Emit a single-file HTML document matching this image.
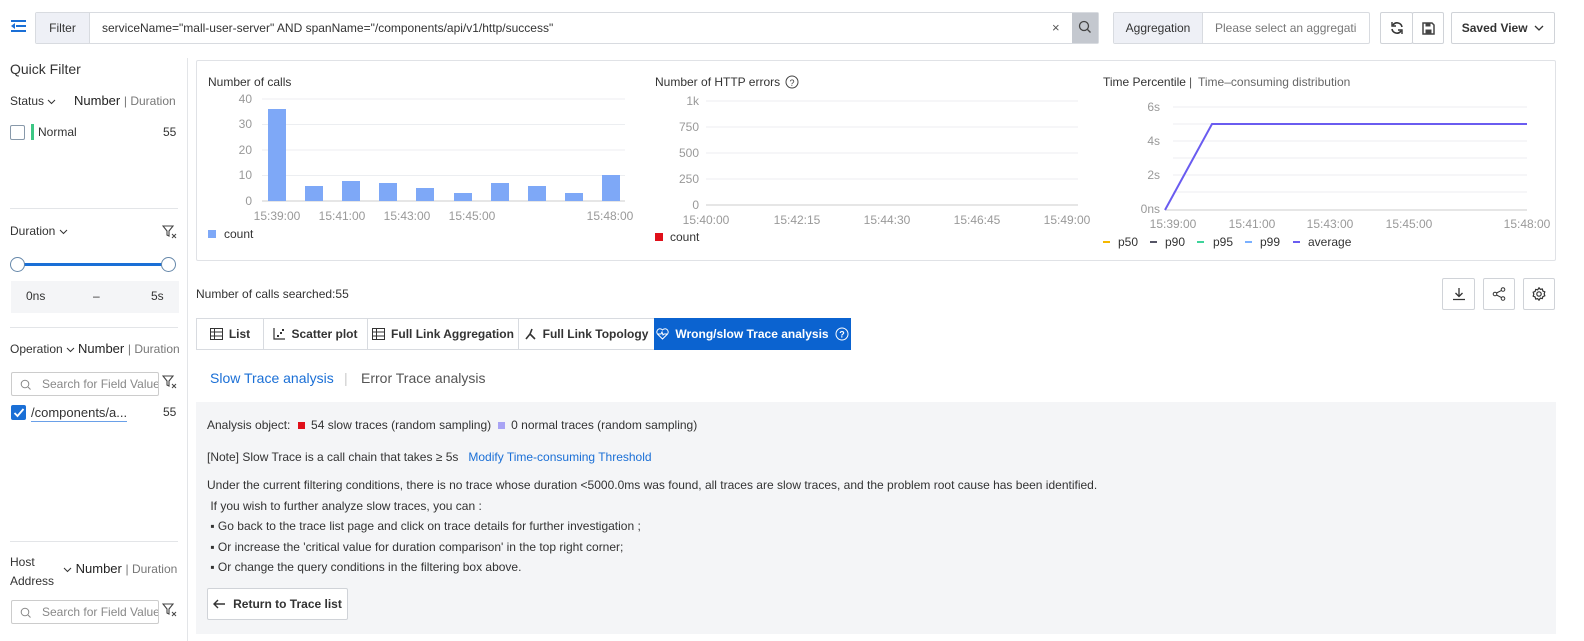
<!DOCTYPE html>
<html><head><meta charset="utf-8"><style>
*{box-sizing:border-box;margin:0;padding:0}
body{width:1584px;height:641px;background:#fff;font-family:"Liberation Sans",sans-serif;color:#333;position:relative;overflow:hidden;font-size:12px}
.a{position:absolute;white-space:nowrap}
.box{position:absolute;border:1px solid #d8dbe0;border-radius:2px;background:#fff}
.btn{position:absolute;border:1px solid #d0d3d8;border-radius:2px;background:#fff;display:flex;align-items:center;justify-content:center}
.g{color:#777}
.sep{position:absolute;height:1px;background:#e3e5e8}
.srch{position:absolute;border:1px solid #ccc;border-radius:2px;height:24px;color:#888;font-size:12px;line-height:22px;padding-left:30px;white-space:nowrap;overflow:hidden}
.tab{position:absolute;top:318px;height:32px;border:1px solid #d8dbe0;display:flex;align-items:center;justify-content:center;font-size:12px;font-weight:bold;color:#333;gap:6px;white-space:nowrap}
</style></head><body>
<svg class="a" style="left:11px;top:19px" width="16" height="14"><g fill="#1a6fd6"><rect x="0" y="1" width="15" height="2"/><rect x="5" y="6" width="10" height="2"/><rect x="0" y="11" width="15" height="2"/><path d="M0 7l4-3v6z"/></g></svg>
<div class="box" style="left:35px;top:12px;width:1064px;height:32px;"></div>
<div class="a" style="left:36px;top:13px;width:54px;height:30px;background:#eef0f6;border-right:1px solid #d8dbe0;line-height:30px;text-align:center;font-size:12px">Filter</div>
<div class="a" style="left:102px;top:13px;line-height:30px;font-size:12px">serviceName="mall-user-server" AND spanName="/components/api/v1/http/success"</div>
<div class="a" style="left:1052px;top:13px;line-height:30px;font-size:13px;color:#555">×</div>
<div class="a" style="left:1072px;top:13px;width:26px;height:30px;background:#c4c8cf"></div>
<svg class="a" style="left:1078px;top:20px" width="14" height="14"><circle cx="6" cy="6" r="4.5" fill="none" stroke="#444" stroke-width="1.3"/><path d="M9.5 9.5l3 3" stroke="#444" stroke-width="1.3"/></svg>
<div class="box" style="left:1113px;top:12px;width:257px;height:32px"></div>
<div class="a" style="left:1114px;top:13px;width:89px;height:30px;background:#eef0f6;border-right:1px solid #d8dbe0;line-height:30px;text-align:center">Aggregation</div>
<div class="a" style="left:1215px;top:13px;line-height:30px;color:#777">Please select an aggregati</div>
<div class="btn" style="left:1380px;top:12px;width:33px;height:32px"><svg width="14" height="14"><path d="M12 6A5 5 0 0 0 3 4M2 8a5 5 0 0 0 9 2" fill="none" stroke="#333" stroke-width="1.6"/><path d="M2 1v4h4M12 13V9H8" fill="none" stroke="#333" stroke-width="1.4"/></svg></div>
<div class="btn" style="left:1412px;top:12px;width:32px;height:32px"><svg width="13" height="13"><path d="M1 1h9l2 2v9H1z" fill="none" stroke="#444" stroke-width="1.5"/><rect x="3.5" y="1" width="5" height="3.5" fill="#444"/><rect x="3.5" y="7.5" width="6" height="4" fill="#444"/></svg></div>
<div class="btn" style="left:1451px;top:12px;width:104px;height:32px;font-weight:bold">Saved View&nbsp;&nbsp;<svg width="10" height="6"><path d="M1 1l4 4 4-4" fill="none" stroke="#333" stroke-width="1.3"/></svg></div>

<div class="a" style="left:187px;top:58px;width:1px;height:583px;background:#e3e5e8"></div>
<div class="a" style="left:10px;top:61px;font-size:14px">Quick Filter</div>
<div class="a" style="left:10px;top:94px">Status <svg width="9" height="6"><path d="M1 1l3.5 3.5L8 1" fill="none" stroke="#333"/></svg></div>
<div class="a" style="left:74px;top:93px;font-size:13px"><span style="color:#222">Number</span> <span class="g" style="font-size:12px">| Duration</span></div>
<div class="a" style="left:10px;top:125px;width:15px;height:15px;border:1px solid #8899aa;border-radius:2px"></div>
<div class="a" style="left:31px;top:124px;width:3px;height:16px;background:#3cc784"></div>
<div class="a" style="left:38px;top:125px">Normal</div>
<div class="a" style="left:163px;top:125px">55</div>
<div class="sep" style="left:10px;top:208px;width:168px"></div>
<div class="a" style="left:10px;top:224px">Duration <svg width="9" height="6"><path d="M1 1l3.5 3.5L8 1" fill="none" stroke="#333"/></svg></div>
<svg class="a" style="left:162px;top:224px" width="16" height="16"><path d="M1 2h10l-4 5v5l-2-1V7z" fill="none" stroke="#444" stroke-width="1.1"/><path d="M10 10l4 4M14 10l-4 4" stroke="#444"/></svg>
<div class="a" style="left:18px;top:263px;width:151px;height:3px;background:#1a6fd6"></div>
<div class="a" style="left:10px;top:257px;width:15px;height:15px;border-radius:50%;border:1.5px solid #6688aa;background:#fff"></div>
<div class="a" style="left:161px;top:257px;width:15px;height:15px;border-radius:50%;border:1.5px solid #6688aa;background:#fff"></div>
<div class="a" style="left:11px;top:281px;width:168px;height:32px;background:#f4f5f7"></div>
<div class="a" style="left:26px;top:289px">0ns</div><div class="a" style="left:93px;top:289px">–</div><div class="a" style="left:151px;top:289px">5s</div>
<div class="sep" style="left:10px;top:327px;width:168px"></div>
<div class="a" style="left:10px;top:342px">Operation <svg width="9" height="6"><path d="M1 1l3.5 3.5L8 1" fill="none" stroke="#333"/></svg></div>
<div class="a" style="left:78px;top:341px;font-size:13px"><span style="color:#222">Number</span> <span class="g" style="font-size:12px">| Duration</span></div>
<div class="srch" style="left:11px;top:372px;width:148px">Search for Field Value</div>
<svg class="a" style="left:20px;top:379px" width="11" height="11"><circle cx="5" cy="5" r="3.8" fill="none" stroke="#888"/><path d="M8 8l2.5 2.5" stroke="#888"/></svg>
<svg class="a" style="left:162px;top:374px" width="16" height="16"><path d="M1 2h10l-4 5v5l-2-1V7z" fill="none" stroke="#444" stroke-width="1.1"/><path d="M10 10l4 4M14 10l-4 4" stroke="#444"/></svg>
<div class="a" style="left:11px;top:405px;width:15px;height:15px;background:#1a6fd6;border-radius:2px"></div>
<svg class="a" style="left:13px;top:407px" width="12" height="12"><path d="M1.5 6l3 3 6-7" fill="none" stroke="#fff" stroke-width="1.8"/></svg>
<div class="a" style="left:31px;top:405px;font-size:13px;border-bottom:1px solid #6aa0e8;padding-bottom:1px">/components/a...</div>
<div class="a" style="left:163px;top:405px">55</div>
<div class="sep" style="left:10px;top:541px;width:168px"></div>
<div class="a" style="left:10px;top:553px;line-height:19px">Host<br>Address</div>
<div class="a" style="left:63px;top:561px;font-size:13px"><svg width="9" height="6"><path d="M1 1l3.5 3.5L8 1" fill="none" stroke="#333"/></svg> <span style="color:#222">Number</span> <span class="g" style="font-size:12px">| Duration</span></div>
<div class="srch" style="left:11px;top:600px;width:148px">Search for Field Value</div>
<svg class="a" style="left:20px;top:607px" width="11" height="11"><circle cx="5" cy="5" r="3.8" fill="none" stroke="#888"/><path d="M8 8l2.5 2.5" stroke="#888"/></svg>
<svg class="a" style="left:162px;top:602px" width="16" height="16"><path d="M1 2h10l-4 5v5l-2-1V7z" fill="none" stroke="#444" stroke-width="1.1"/><path d="M10 10l4 4M14 10l-4 4" stroke="#444"/></svg>

<div class="box" style="left:196px;top:60px;width:1360px;height:201px;border-color:#e0e2e6"></div>
<svg class="a" style="left:0;top:0" width="1584" height="270" font-family="Liberation Sans" font-size="12">
<text x="208" y="86" fill="#333">Number of calls</text>
<g stroke="#eceef1"><line x1="262" y1="99" x2="625" y2="99"/><line x1="262" y1="124.5" x2="625" y2="124.5"/><line x1="262" y1="150" x2="625" y2="150"/><line x1="262" y1="175.5" x2="625" y2="175.5"/></g>
<line x1="262" y1="201" x2="625" y2="201" stroke="#ccc"/>
<g fill="#999" text-anchor="end"><text x="252" y="103">40</text><text x="252" y="128">30</text><text x="252" y="154">20</text><text x="252" y="179">10</text><text x="252" y="205">0</text></g>
<g fill="#7ea8f7"><rect x="268" y="109" width="18" height="92"/><rect x="305" y="186" width="18" height="15"/><rect x="342" y="181" width="18" height="20"/><rect x="379" y="183" width="18" height="18"/><rect x="416" y="188" width="18" height="13"/><rect x="454" y="193" width="18" height="8"/><rect x="491" y="183" width="18" height="18"/><rect x="528" y="186" width="18" height="15"/><rect x="565" y="193" width="18" height="8"/><rect x="602" y="175" width="18" height="26"/></g>
<g fill="#999" text-anchor="middle"><text x="277" y="220">15:39:00</text><text x="342" y="220">15:41:00</text><text x="407" y="220">15:43:00</text><text x="472" y="220">15:45:00</text><text x="610" y="220">15:48:00</text></g>
<rect x="208" y="230" width="8" height="8" fill="#7ea8f7"/><text x="224" y="238" fill="#333">count</text>

<text x="655" y="86" fill="#333">Number of HTTP errors</text>
<circle cx="792" cy="82" r="6" fill="none" stroke="#444"/><text x="792" y="86" font-size="9" text-anchor="middle" fill="#444">?</text>
<g stroke="#eceef1"><line x1="706" y1="101" x2="1078" y2="101"/><line x1="706" y1="127" x2="1078" y2="127"/><line x1="706" y1="153" x2="1078" y2="153"/><line x1="706" y1="179" x2="1078" y2="179"/></g>
<line x1="706" y1="205" x2="1078" y2="205" stroke="#ccc"/>
<g fill="#999" text-anchor="end"><text x="699" y="105">1k</text><text x="699" y="131">750</text><text x="699" y="157">500</text><text x="699" y="183">250</text><text x="699" y="209">0</text></g>
<g fill="#999" text-anchor="middle"><text x="706" y="224">15:40:00</text><text x="797" y="224">15:42:15</text><text x="887" y="224">15:44:30</text><text x="977" y="224">15:46:45</text><text x="1067" y="224">15:49:00</text></g>
<rect x="655" y="233" width="8" height="8" fill="#e0101a"/><text x="670" y="241" fill="#333">count</text>

<text x="1103" y="86" fill="#333">Time Percentile</text><text x="1189" y="86" fill="#555">|</text><text x="1198" y="86" fill="#666">Time–consuming distribution</text>
<g stroke="#eceef1"><line x1="1173" y1="107" x2="1527" y2="107"/><line x1="1173" y1="124" x2="1527" y2="124"/><line x1="1173" y1="141" x2="1527" y2="141"/><line x1="1173" y1="158" x2="1527" y2="158"/><line x1="1173" y1="175" x2="1527" y2="175"/><line x1="1173" y1="192" x2="1527" y2="192"/></g>
<line x1="1165" y1="210" x2="1527" y2="210" stroke="#ccc"/>
<g fill="#999" text-anchor="end"><text x="1160" y="111">6s</text><text x="1160" y="145">4s</text><text x="1160" y="179">2s</text><text x="1160" y="213">0ns</text></g>
<polyline points="1165,210 1212,124 1527,124" fill="none" stroke="#6a5cf0" stroke-width="2"/>
<g fill="#999" text-anchor="middle"><text x="1173" y="228">15:39:00</text><text x="1252" y="228">15:41:00</text><text x="1330" y="228">15:43:00</text><text x="1409" y="228">15:45:00</text><text x="1527" y="228">15:48:00</text></g>
<g font-size="12" fill="#333"><rect x="1103" y="241" width="7" height="2" fill="#f5b800"/><text x="1118" y="246">p50</text><rect x="1150" y="241" width="7" height="2" fill="#556"/><text x="1165" y="246">p90</text><rect x="1197" y="241" width="7" height="2" fill="#3ed39a"/><text x="1213" y="246">p95</text><rect x="1245" y="241" width="7" height="2" fill="#7ab0ff"/><text x="1260" y="246">p99</text><rect x="1293" y="241" width="7" height="2" fill="#6a5cf0"/><text x="1308" y="246">average</text></g>
</svg>

<div class="a" style="left:196px;top:287px">Number of calls searched:55</div>
<div class="btn" style="left:1442px;top:278px;width:33px;height:32px"><svg width="14" height="14"><path d="M7 1v8M3.5 6L7 9.5 10.5 6M1 12.5h12" fill="none" stroke="#333" stroke-width="1.3"/></svg></div>
<div class="btn" style="left:1483px;top:278px;width:32px;height:32px"><svg width="14" height="14"><circle cx="3" cy="7" r="1.8" fill="none" stroke="#333"/><circle cx="11" cy="2.5" r="1.8" fill="none" stroke="#333"/><circle cx="11" cy="11.5" r="1.8" fill="none" stroke="#333"/><path d="M4.5 6l5-2.6M4.5 8l5 2.6" stroke="#333"/></svg></div>
<div class="btn" style="left:1523px;top:278px;width:32px;height:32px"><svg width="14" height="14"><path d="M7 0.8l1.3 1.6 2-.4.6 2 1.9.8-.6 2 .6 2-1.9.8-.6 2-2-.4L7 13.2l-1.3-1.6-2 .4-.6-2-1.9-.8.6-2-.6-2 1.9-.8.6-2 2 .4z" fill="none" stroke="#333" stroke-width="1.2"/><circle cx="7" cy="7" r="2.2" fill="none" stroke="#333" stroke-width="1.2"/></svg></div>

<div class="tab" style="left:196px;width:68px"><svg width="13" height="12"><rect x=".5" y=".5" width="12" height="11" fill="none" stroke="#333"/><path d="M.5 4h12M.5 8h12M4.5 .5v11" stroke="#333"/></svg>List</div>
<div class="tab" style="left:263px;width:105px"><svg width="12" height="12"><path d="M1 0v11h11" fill="none" stroke="#333" stroke-width="1.2"/><rect x="4" y="7" width="2" height="2" fill="#333"/><rect x="7" y="4" width="2" height="2" fill="#333"/><rect x="9" y="1" width="2" height="2" fill="#333"/></svg>Scatter plot</div>
<div class="tab" style="left:367px;width:152px"><svg width="13" height="12"><rect x=".5" y=".5" width="12" height="11" fill="none" stroke="#333"/><path d="M.5 4h12M.5 8h12M4.5 .5v11" stroke="#333"/></svg>Full Link Aggregation</div>
<div class="tab" style="left:518px;width:137px"><svg width="12" height="12"><path d="M7 1L5 6 1 11M5 6l5 5" fill="none" stroke="#333" stroke-width="1.6"/></svg>Full Link Topology</div>
<div class="tab" style="left:654px;width:197px;background:#0b63d0;border-color:#0b63d0;color:#fff"><svg width="13" height="12"><path d="M6.5 11L1.5 6A3 3 0 0 1 6.5 2 3 3 0 0 1 11.5 6z" fill="none" stroke="#fff"/><path d="M2 6h3l1-2 1 3 1-1h3" fill="none" stroke="#fff"/></svg>Wrong/slow Trace analysis <svg width="14" height="14"><circle cx="7" cy="7" r="6" fill="none" stroke="#fff"/><text x="7" y="10.5" font-size="9" text-anchor="middle" fill="#fff" font-family="Liberation Sans">?</text></svg></div>

<div class="a" style="left:210px;top:370px;font-size:14px;color:#1a6fd6">Slow Trace analysis</div>
<div class="a" style="left:344px;top:370px;font-size:14px;color:#ccc">|</div>
<div class="a" style="left:361px;top:370px;font-size:14px;color:#555">Error Trace analysis</div>

<div class="a" style="left:196px;top:402px;width:1360px;height:232px;background:#f4f5f7"></div>
<div class="a" style="left:207px;top:418px">Analysis object: <span style="display:inline-block;width:7px;height:7px;background:#e0101a;margin:0 3px 0 4px"></span> 54 slow traces (random sampling) &nbsp;<span style="display:inline-block;width:7px;height:7px;background:#a9a4f5;margin-right:3px"></span> 0 normal traces (random sampling)</div>
<div class="a" style="left:207px;top:450px">[Note] Slow Trace is a call chain that takes ≥ 5s &nbsp;&nbsp;<span style="color:#1a6fd6">Modify Time-consuming Threshold</span></div>
<div class="a" style="left:207px;top:475px;line-height:20.5px">Under the current filtering conditions, there is no trace whose duration &lt;5000.0ms was found, all traces are slow traces, and the problem root cause has been identified.<br>&nbsp;If you wish to further analyze slow traces, you can :<br>&nbsp;▪ Go back to the trace list page and click on trace details for further investigation ;<br>&nbsp;▪ Or increase the 'critical value for duration comparison' in the top right corner;<br>&nbsp;▪ Or change the query conditions in the filtering box above.</div>
<div class="btn" style="left:207px;top:588px;width:141px;height:32px;font-weight:bold"><svg width="13" height="10" style="margin-right:7px"><path d="M12 5H1M5 1L1 5l4 4" fill="none" stroke="#333" stroke-width="1.4"/></svg>Return to Trace list</div>
</body></html>
